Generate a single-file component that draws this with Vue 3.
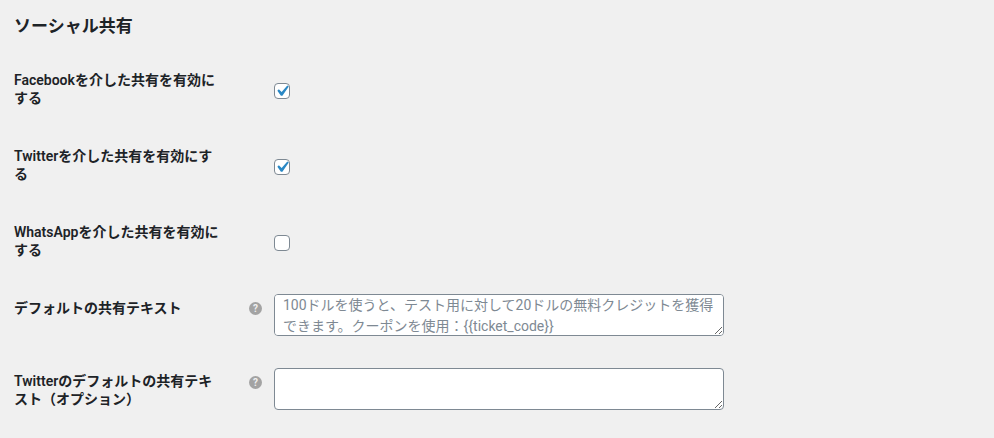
<template>
  <div class="page">
    <h2 class="title">ソーシャル共有</h2>

    <div v-for="item in checkRows" :key="item.label" class="row">
      <div class="label">{{ item.label }}</div>
      <div class="help"></div>
      <div class="field check-field">
        <span class="check">
          <input type="checkbox" :checked="item.checked" />
          <svg v-if="item.checked" class="tick" viewBox="0 0 20 20">
            <path d="M14.83 4.89l1.34.94-5.81 8.38H9.02L5.78 9.67l1.34-1.25 2.57 2.4z" />
          </svg>
        </span>
      </div>
    </div>

    <div v-for="item in textRows" :key="item.label" class="row text-row">
      <div class="label">{{ item.label }}</div>
      <div class="help">
        <span class="help-icon">?</span>
      </div>
      <div class="field">
        <textarea :placeholder="item.placeholder"></textarea>
      </div>
    </div>
  </div>
</template>

<script setup>
const checkRows = [
  { label: 'Facebookを介した共有を有効にする', checked: true },
  { label: 'Twitterを介した共有を有効にする', checked: true },
  { label: 'WhatsAppを介した共有を有効にする', checked: false },
];

const textRows = [
  {
    label: 'デフォルトの共有テキスト',
    placeholder: '100ドルを使うと、テスト用に対して20ドルの無料クレジットを獲得できます。クーポンを使用：{{ticket_code}}',
  },
  { label: 'Twitterのデフォルトの共有テキスト（オプション）', placeholder: '' },
];
</script>

<style>
html,
body {
  background: #f0f0f0;
}
</style>

<style scoped>
.page {
  height: 438px;
  overflow: hidden;
  box-sizing: border-box;
  padding: 15px 0 0 14px;
  background: #f0f0f0;
  color: #1d2327;
  font-family: Roboto, "Noto Sans CJK JP", sans-serif;
}

.title {
  margin: 0;
  height: 35px;
  font-size: 17px;
  line-height: 22px;
  font-weight: 700;
}

.row {
  display: flex;
  height: 76px;
}

.text-row {
  height: 74px;
}

.label {
  width: 210px;
  padding-top: 21px;
  font-size: 14px;
  line-height: 18px;
  font-weight: 600;
}

.text-row:last-child .label {
  padding-top: 20px;
}

.help {
  width: 50px;
  padding: 24px 0 0 25px;
  box-sizing: border-box;
}

.help-icon {
  display: block;
  width: 13px;
  height: 13px;
  border-radius: 50%;
  background: #a3a3a3;
  color: #f0f0f0;
  font-size: 10px;
  line-height: 13px;
  font-weight: 700;
  text-align: center;
}

.field {
  padding-top: 16px;
}

.check-field {
  padding-top: 33px;
}

.check {
  position: relative;
  display: block;
  width: 16px;
  height: 16px;
}

.check input {
  appearance: none;
  display: block;
  width: 16px;
  height: 16px;
  margin: 0;
  background: #fff;
  border: 1px solid #7e8993;
  border-radius: 4px;
  box-sizing: border-box;
}

.tick {
  position: absolute;
  top: -3px;
  left: -3px;
  width: 22px;
  height: 22px;
  fill: #2a88c5;
  pointer-events: none;
}

textarea {
  display: block;
  width: 450px;
  height: 42px;
  box-sizing: border-box;
  padding: 0 8px;
  background: #fff;
  border: 1px solid #7e8993;
  border-radius: 4px;
  color: #2c3338;
  font-family: inherit;
  font-size: 14px;
  line-height: 21px;
}

textarea::placeholder {
  color: #7e8993;
  opacity: 1;
}
</style>
